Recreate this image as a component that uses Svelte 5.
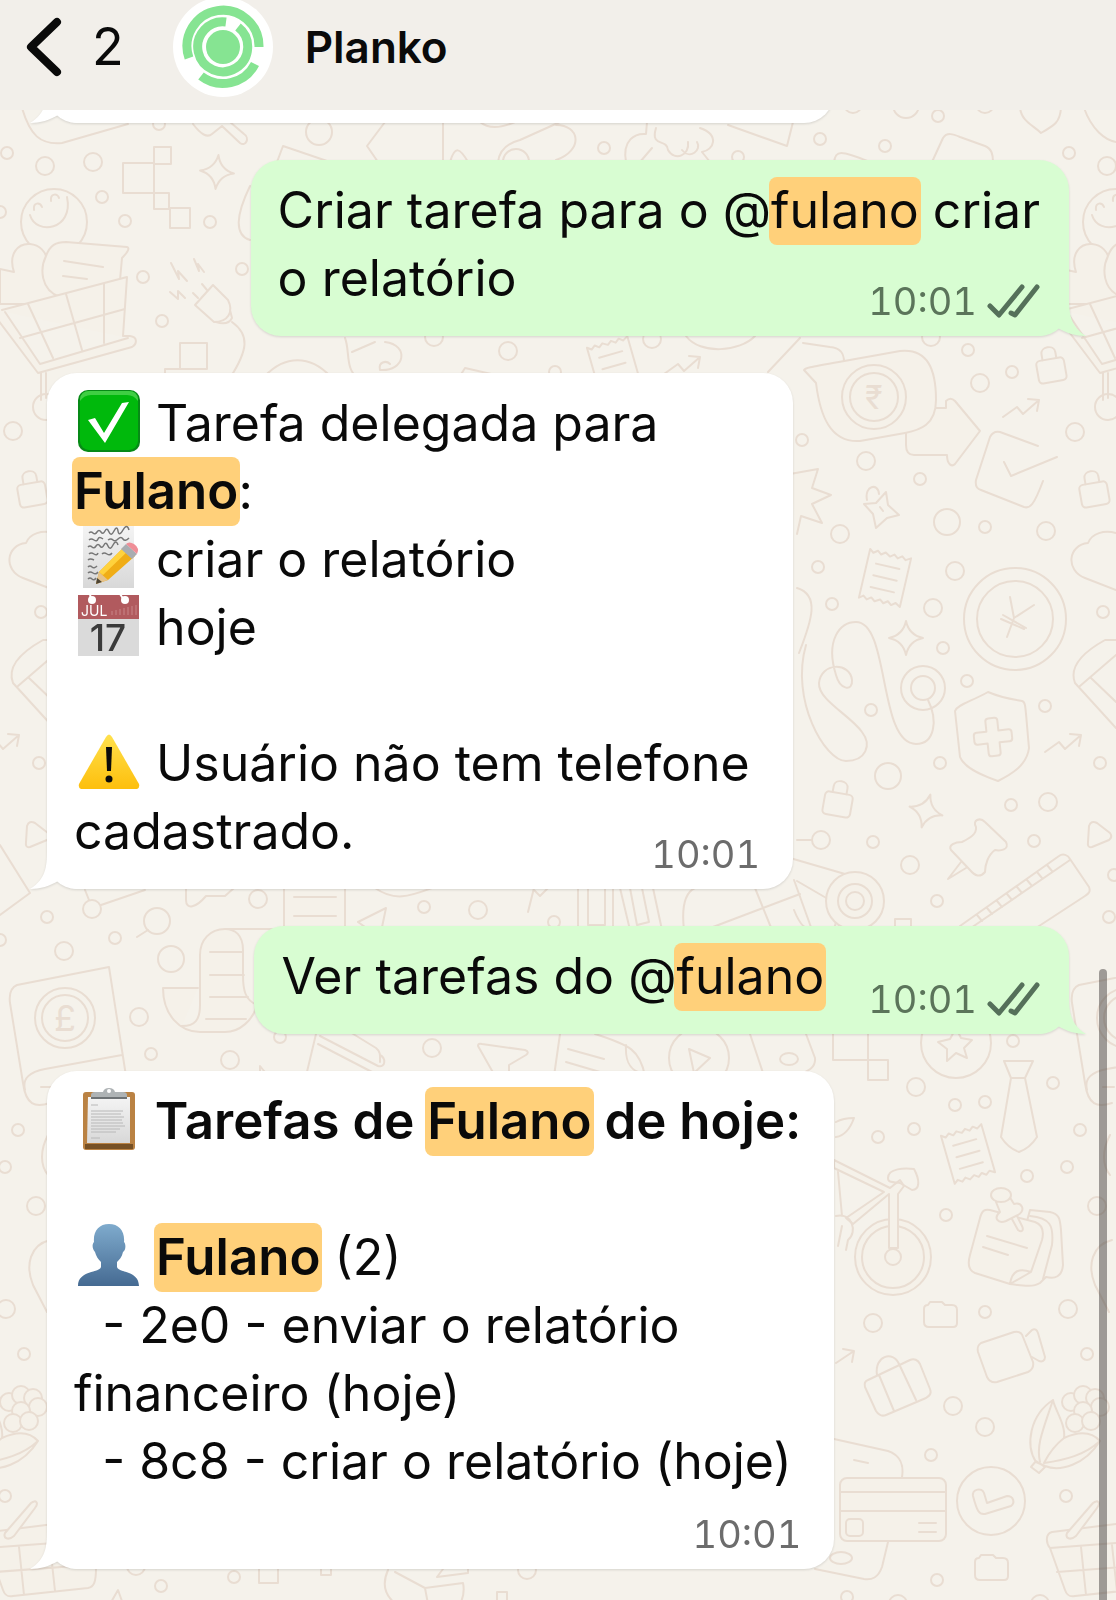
<script lang="ts">
	type Icon = 'check' | 'memo' | 'calendar' | 'warning' | 'clipboard' | 'person';

	interface Segment {
		text?: string;
		icon?: Icon;
		bold?: boolean;
		mark?: boolean;
	}

	interface Message {
		from: 'me' | 'bot';
		time: string;
		/** Where the time sits: over the last line, beside it, or on a row below. */
		meta: 'over' | 'beside' | 'below';
		lines: Segment[][];
	}

	const contact = 'Planko';
	const unread = 2;

	const messages: Message[] = [
		{
			from: 'me',
			time: '10:01',
			meta: 'over',
			lines: [
				[{ text: 'Criar tarefa para o @' }, { text: 'fulano', mark: true }, { text: ' criar' }],
				[{ text: 'o relatório' }]
			]
		},
		{
			from: 'bot',
			time: '10:01',
			meta: 'over',
			lines: [
				[{ icon: 'check' }, { text: ' Tarefa delegada para' }],
				[{ text: 'Fulano', bold: true, mark: true }, { text: ':' }],
				[{ icon: 'memo' }, { text: ' criar o relatório' }],
				[{ icon: 'calendar' }, { text: ' hoje' }],
				[],
				[{ icon: 'warning' }, { text: ' Usuário não tem telefone' }],
				[{ text: 'cadastrado.' }]
			]
		},
		{
			from: 'me',
			time: '10:01',
			meta: 'beside',
			lines: [[{ text: 'Ver tarefas do @' }, { text: 'fulano', mark: true }]]
		},
		{
			from: 'bot',
			time: '10:01',
			meta: 'below',
			lines: [
				[
					{ icon: 'clipboard' },
					{ text: ' Tarefas de ', bold: true },
					{ text: 'Fulano', bold: true, mark: true },
					{ text: ' de hoje:', bold: true }
				],
				[],
				[{ icon: 'person' }, { text: ' ' }, { text: 'Fulano', bold: true, mark: true }, { text: ' (2)' }],
				[{ text: '  - 2e0 - enviar o relatório' }],
				[{ text: 'financeiro (hoje)' }],
				[{ text: '  - 8c8 - criar o relatório (hoje)' }]
			]
		}
	];

	// wallpaper bubbles, grouped by radius
	const dots = [
		{
			r: 6,
			at: [
				[7, 153], [102, 197], [125, 221], [210, 222], [159, 124], [143, 277], [162, 321], [242, 269], [0, 212],
				[555, 372], [604, 148], [820, 139], [885, 146], [938, 116], [1069, 153], [738, 157], [968, 350],
				[1012, 372], [802, 440], [920, 479], [985, 527], [818, 567], [832, 604], [1103, 612], [943, 648],
				[967, 681], [871, 710], [1045, 706], [940, 763], [1100, 763], [1011, 805], [873, 842], [1034, 841],
				[937, 901], [1109, 917], [1114, 875], [47, 917], [115, 938], [151, 1054], [424, 907], [554, 922],
				[280, 1037], [18, 1130], [5, 1167], [1013, 1041], [955, 1105], [985, 1102], [1053, 1083],
				[1080, 1130], [878, 1137], [914, 1129], [1067, 1167], [1027, 1176], [946, 1215], [985, 1312],
				[931, 1455], [1087, 1354], [1066, 1496], [937, 1580], [847, 1597], [24, 1354], [5, 1496],
				[234, 1577], [161, 1586], [41, 612], [39, 763], [0, 940]
			]
		},
		{
			r: 9,
			at: [
				[45, 166], [93, 162], [434, 337], [508, 351], [1107, 166], [853, 104], [985, 104], [652, 339],
				[931, 337], [980, 383], [1075, 432], [866, 461], [1046, 531], [840, 534], [955, 571], [933, 608],
				[1048, 802], [821, 840], [910, 865], [92, 909], [64, 951], [139, 1017], [230, 1060], [258, 899],
				[478, 910], [432, 1048], [36, 1206], [6, 1309], [916, 1087], [1097, 1206], [1068, 1309],
				[873, 1323], [953, 1406], [985, 1427], [898, 1604], [1040, 1604], [136, 1566], [527, 1570], [13, 431]
			]
		},
		{
			r: 13,
			at: [[319, 132], [516, 162], [906, 105], [947, 522], [888, 776], [171, 959], [157, 921], [1108, 407], [46, 407]]
		}
	];
</script>

{#snippet lock(x: number, y: number, angle: number)}
	<g transform="translate({x} {y}) rotate({angle})">
		<rect x="-14" y="-9" width="28" height="23" rx="4" />
		<path d="M-7 -9V-15C-7 -23 7 -23 7 -15V-9" />
	</g>
{/snippet}

{#snippet receipt(x: number, y: number, angle: number)}
	<g transform="translate({x} {y}) rotate({angle})">
		<path
			d="M-21 -25l4 3 4-3 4 3 4-3 5 3 4-3 4 3 4-3 4 3 5-3V25l-5-3-4 3-4-3-4 3-4-3-5 3-4-3-4 3-4-3-4 3ZM-12 -12H12M-12 0H12M-12 12H12"
		/>
	</g>
{/snippet}

{#snippet sparkle(x: number, y: number, angle: number)}
	<path
		transform="translate({x} {y}) rotate({angle})"
		d="M0 -17Q3 -3 17 0Q3 3 0 17Q-3 3 -17 0Q-3 -3 0 -17Z"
	/>
{/snippet}

{#snippet trend(x: number, y: number)}
	<path transform="translate({x} {y})" d="M0 0L14 -10L20 -3L36 -17M25 -18L36 -17L34 -6" />
{/snippet}

{#snippet folder(x: number, y: number)}
	<path
		transform="translate({x} {y})"
		d="M0 8C0 5 2 4 4 4L6 1H18L21 4H28C31 4 33 6 33 9V22C33 25 31 26 29 26H5C2 26 0 24 0 21Z"
	/>
{/snippet}

{#snippet icon(name: Icon)}
	<svg class="icon" viewBox="0 0 62 62" aria-hidden="true">
		{#if name === 'check'}
			<rect width="62" height="62" rx="10" fill="#078a16" />
			<rect x="2" y="1" width="58" height="59" rx="9" fill="#00b90c" />
			<path d="M11 1H51Q59 1 60 9V11Q56 5 49 5H13Q6 5 2 11V9Q3 1 11 1Z" fill="#3fce43" />
			<path d="M10 30L17 28L26 43L44 13L51 12L27 53Z" fill="#fff" />
		{:else if name === 'memo'}
			<path d="M5 0H56V62H5Z" fill="url(#paper)" />
			<g fill="none" stroke="#777" stroke-width="1.5">
				<path d="M11 7q2-2 4 0t4-1t4 0t4-1 4 1t5-1t4 0t5-1t6 0" />
				<path d="M11 14q2-2 5 0t4-1t5 0M30 14q3-2 5 0t5-1t5 0t6-1" />
				<path d="M10 21q2-2 4 0t4-1t4 0t4-1t4 1t5-1t5 0" />
				<path d="M11 28q2-2 5 0t4-1M24 28q2-2 5 0t5-1M10 34q2-2 6 0" />
				<path d="M10 41q2-2 4 0t5-1M10 47q2-2 5 0t5-1M10 53q2-2 4 0t4-1" />
			</g>
			<path d="M47 20L57 30L30 54L18 58L21 46Z" fill="#f0ad16" />
			<path d="M47 20L51 24L25 49L21 46Z" fill="#ffd23d" />
			<path d="M21 46L30 54L18 58Z" fill="#e4c28d" />
			<path d="M18 58L19 52L24 56Z" fill="#4c4434" />
			<path d="M43 23L48 18L59 28L54 33Z" fill="#a9adb1" />
			<path d="M48 18Q51 15 56 18Q62 22 59 28Z" fill="#ef8e97" />
		{:else if name === 'calendar'}
			<path d="M0 1H61V26H0Z" fill="#b15a5e" />
			<path d="M0 25H61V62H0Z" fill="#dadada" />
			<path d="M34 21v-4m4 4v-5m4 5v-6m4 6v-7m4 7v-8m4 8v-9m4 9v-10" stroke="#c98588" />
			<path d="M12 0L13 6M42 0L46 6" stroke="#fff" stroke-width="2" />
			<circle cx="14" cy="6" r="4" fill="#fff" />
			<circle cx="47" cy="6" r="4" fill="#fff" />
			<text x="3" y="22" font-size="14" fill="#fff">JUL</text>
			<text x="30" y="57" font-size="37" font-weight="500" text-anchor="middle" fill="#3b3b3b">17</text>
		{:else if name === 'warning'}
			<path d="M28 7Q31 2 34 7L61 54Q62 58 59 59H3Q0 58 1 54Z" fill="url(#amber)" />
			<path d="M28 17H34L33 41H29Z" fill="#0b0b0b" />
			<circle cx="31" cy="49" r="3.5" fill="#0b0b0b" />
		{:else if name === 'clipboard'}
			<rect x="5" y="4" width="52" height="58" rx="3" fill="#ba8243" />
			<path d="M7 56H55V61H7Z" fill="#765025" />
			<path d="M10 9H52V55H9Z" fill="url(#paper)" />
			<path d="M13 17h7M13 23h32M13 26h30M13 29h33M13 32h31M13 35h32M13 38h34M13 41h29M13 44h25M13 50h9" stroke="#b8b8b8" />
			<path d="M13 10V7Q13 4 17 4H25Q26 0 31 0Q36 0 37 4H45Q49 4 49 7V10Z" fill="#aeb3b5" />
			<path d="M13 10H49" stroke="#6e7376" stroke-width="2" />
			<circle cx="31" cy="3" r="2" fill="#fff" />
		{:else}
			<path
				d="M31 0C41 0 47 7 46 18C48 20 48 26 45 28C44 33 41 36 39 38V43C40 49 61 46 61 62H0C0 46 22 49 23 43V38C20 35 18 32 17 28C14 25 14 20 16 18C15 7 21 0 31 0Z"
				fill="url(#blue)"
			/>
		{/if}
	</svg>
{/snippet}

<div class="screen">
	<svg class="wallpaper" viewBox="0 0 1116 1600" aria-hidden="true">
		<defs>
			<linearGradient id="paper" x1="0" y1="0" x2="0" y2="1">
				<stop offset="0" stop-color="#f4f4f4" />
				<stop offset="1" stop-color="#d8d8d8" />
			</linearGradient>
			<linearGradient id="amber" x1="0" y1="0" x2="0" y2="1">
				<stop offset="0" stop-color="#ffe14d" />
				<stop offset="1" stop-color="#fdbf0d" />
			</linearGradient>
			<linearGradient id="blue" x1="0" y1="0" x2="0" y2="1">
				<stop offset="0" stop-color="#7fabcd" />
				<stop offset="1" stop-color="#456a92" />
			</linearGradient>
		</defs>

		{#each dots as { r, at }}
			{#each at as [cx, cy]}
				<circle {cx} {cy} {r} />
			{/each}
		{/each}

		<!-- drawings that repeat on both edges of the tile -->
		{#each [0, 1062] as shift}
			<g transform="translate({shift} 0)">
				<circle cx="54" cy="222" r="33" />
				<path d="M30 215C36 236 74 230 67 197M34 210C33 202 40 202 42 207M51 201C50 193 58 193 59 198" />
				<path class="fill" d="M0 269L14 272C8 254 18 243 30 244C40 245 46 252 47 260L60 297L42 304L0 304Z" />
				<path
					class="fill"
					d="M60 297C40 290 40 268 46 256C50 245 56 242 66 242L127 247C130 248 128 252 122 258L120 280Z"
				/>
				<path d="M64 261L103 267M63 276L87 279" />
				<path
					class="fill"
					d="M2 310L127 277L123 336L130 336C138 337 137 344 132 347L38 373L-8 312M5 312L40 364L128 338M28 304L53 358M66 294L82 350M104 284V343M20 338L125 309M41 373V400M46 373V398"
				/>
				<path d="M54 533C42 530 30 533 26 543C6 545 3 570 23 578L54 590" />
				<path d="M54 640H43C16 655 8 670 13 683L54 728M18 686L54 655M29 678L54 702" />
				<path d="M27 826Q29 820 35 823L48 833Q51 837 47 840L30 847Q25 848 26 842Z" />
				{@render lock(32, 492, -10)}
				{@render trend(-17, 752)}
				<path
					d="M109 967L17 985C10 988 9 995 10 1003L23 1083C26 1105 35 1108 50 1103M109 967L126 1076M122 1055L45 1069C30 1072 22 1078 25 1090M41 1087H52"
				/>
				<circle cx="65" cy="1018" r="30" />
				<circle cx="65" cy="1018" r="23" />
				<path d="M50 1240C30 1245 25 1265 33 1285L47 1312M48 1135C40 1150 40 1165 48 1175" />
			</g>
		{/each}
		<text x="65" y="1031" font-size="36">£</text>

		{#each [-1062, 0] as shift}
			<g transform="translate({shift} 0)">
				{#each [[1071, 1402], [1083, 1395], [1095, 1398], [1100, 1407], [1083, 1411], [1075, 1423], [1091, 1421]] as [cx, cy]}
					<circle class="fill" {cx} {cy} r="9" />
				{/each}
				<path
					class="fill"
					d="M1053 1400C1030 1415 1025 1445 1036 1462L1045 1466C1060 1472 1085 1465 1100 1441C1090 1430 1075 1433 1064 1438C1066 1425 1055 1410 1053 1400ZM1053 1400C1043 1430 1036 1445 1040 1462M1064 1438C1055 1445 1048 1455 1044 1463C1065 1460 1085 1455 1100 1441M1031 1467L1036 1461L1045 1467L1039 1473Z"
				/>
				<path
					class="fill"
					d="M1116 1524L1052 1532C1045 1534 1046 1543 1050 1548L1065 1590C1067 1596 1070 1597 1075 1596L1150 1588C1156 1587 1158 1582 1158 1568M1050 1548L1116 1543M1057 1572L1150 1565M1081 1547L1086 1595M1112 1545L1117 1591"
				/>
				<path
					class="fill"
					d="M1067 1533L1093 1503C1098 1499 1101 1503 1097 1508L1076 1536C1070 1541 1065 1538 1067 1533Z"
				/>
			</g>
		{/each}

		<!-- upper left -->
		<path d="M123 163H154V193H123ZM154 147H171V164H154ZM154 193H169V209H154ZM170 208H190V228H170Z" />
		<path d="M180 343H207V369H180ZM165 380V369H181" />
		{@render sparkle(217, 172, 5)}
		<path d="M171 263L179 279L178 271L187 281M194 259L199 271L198 264L204 272M170 292L178 299L178 291L185 298" />
		<path
			d="M195 305L213 285L228 300C234 312 228 322 214 322ZM202 284L207 290M193 293L198 298M216 322Q228 326 232 318L230 310M232 322C250 335 248 350 230 378"
		/>
		<path d="M22 108C30 135 40 145 62 143L128 124" />
		<path d="M193 124Q205 140 212 134L222 126L240 143C246 147 250 138 244 134L230 122" />
		<path d="M385 122L367 146L378 162M443 122V162M277 162L283 146L330 162M450 162C455 145 460 148 468 162" />
		<path d="M480 122Q492 132 515 122M498 162Q500 145 520 140L560 122" />
		<path d="M556 125C580 125 584 150 556 160M250 186C236 215 234 235 250 240" />

		<!-- upper right -->
		<path
			d="M647 122L646 134C635 133 622 140 626 162M652 148L640 162M656 128C650 148 667 138 668 150C675 162 690 155 688 142M682 150C690 160 702 150 697 142M700 128C720 135 714 150 702 152L710 162"
		/>
		<path d="M728 125L787 146L793 122M834 162C836 150 840 150 870 162" />
		<path d="M932 162L943 138C947 132 953 134 960 137L985 146C992 149 993 155 993 162" />
		<path d="M1020 108C1022 122 1033 125 1041 133C1055 125 1060 122 1061 108M1084 108C1092 130 1105 140 1116 142" />

		<!-- between the first two messages -->
		<path
			d="M345 338C350 350 345 370 358 378M265 376C285 355 310 355 330 376M375 342L352 352M385 342C410 345 405 372 380 370C378 362 386 360 390 364M460 376L465 368L500 376"
		/>
		<path d="M686 336C700 355 740 352 755 336M800 338L768 372M803 343L830 347C842 348 844 355 844 362" />
		{@render receipt(614, 366, -16)}
		{@render trend(664, 374)}
		{@render lock(1051, 368, -10)}

		<!-- right column -->
		<path
			class="fill"
			d="M936 408H946V401C949 398 952 398 955 401L980 431L955 464C952 467 947 465 947 455H914C908 455 906 451 906 445V420Z"
		/>
		<path
			class="fill"
			d="M804 370C805 367 812 367 900 351C928 348 936 370 936 400C936 425 920 430 905 433L860 441C830 443 820 415 816 383Z"
		/>
		<circle cx="874" cy="397" r="32" />
		<circle cx="874" cy="397" r="24" />
		<text x="874" y="409" font-size="32">₹</text>
		{@render trend(1003, 417)}
		<path d="M1038 446L1000 432C995 431 992 433 990 437L976 480C975 486 977 489 981 490L1024 507C1030 509 1034 505 1043 481M1004 462L1011 476L1057 457" />
		<path class="fill" d="M790 474L818 469L812 488L831 495L812 504L822 523L801 516L797 534" />
		<path
			d="M864 504L876 503L886 492L888 505L899 515L887 518L876 528L873 514ZM867 500C864 486 878 482 879 494M880 507L883 511"
		/>
		{@render receipt(885, 578, 13)}
		<circle cx="1015" cy="619" r="51" />
		<circle cx="1015" cy="619" r="38" />
		<path d="M1010 597L1014 618L1034 605M1014 618L1007 637M1003 615L1026 628M1001 619L1024 629" />
		{@render sparkle(906, 638, 0)}
		{@render sparkle(926, 811, 15)}
		<path d="M797 588C820 595 812 620 799 653" />
		<path
			d="M806 645C790 700 825 761 846 761C866 761 872 745 862 732C850 715 818 700 819 683C821 662 850 662 852 680C853 692 840 690 836 675C825 640 840 622 856 622C890 622 878 744 916 744C935 744 938 720 928 700"
		/>
		<circle cx="923" cy="688" r="22" />
		<circle cx="923" cy="688" r="12" />
		<path
			d="M988 692C1002 698 1010 699 1022 701C1026 702 1025 705 1029 748C1027 765 1012 774 998 781C978 774 964 767 960 757L955 711C957 705 970 702 988 692Z"
		/>
		<path
			class="fill"
			transform="translate(993 737) rotate(-6)"
			d="M-6 -16Q-6 -19 -3 -19H3Q6 -19 6 -16V-6H16Q19 -6 19 -3V3Q19 6 16 6H6V16Q6 19 3 19H-3Q-6 19 -6 16V6H-16Q-19 6 -19 3V-3Q-19 -6 -16 -6H-6Z"
		/>
		{@render lock(838, 802, 10)}
		<path
			d="M951 850C948 845 955 842 962 842C970 838 977 834 976 827C972 820 980 817 985 822L1006 842C1010 850 1000 851 995 850C988 855 985 865 985 872C980 878 975 876 970 870ZM961 862L948 879L966 868"
		/>
		<path
			d="M960 926L1059 856C1063 853 1068 855 1070 859L1089 887C1091 892 1088 894 1085 896L1036 928M968 930L1070 860M977 915L982 921M987 908L992 914M997 901L1002 907M1007 894L1012 900M1017 887L1022 893M1027 880L1032 886M1037 872L1042 878M1047 865L1052 871"
		/>
		<path d="M797 840H812M790 858L845 874M797 881L828 899M794 880L812 930M834 930L840 905M868 930L872 908M895 930V919H911V930" />
		<circle class="fill" cx="855" cy="901" r="29" />
		<circle class="fill" cx="855" cy="901" r="17" />
		<circle cx="855" cy="901" r="9" />

		<!-- between the second and third messages -->
		<path d="M578 888V930M588 888V925H605V888M613 888V930M620 888L630 930M630 888L637 925L649 922L642 888M653 888L662 930" />
		<path d="M684 930Q680 895 695 888M755 888L772 930M705 930L800 894M794 910C800 925 805 930 815 930M534 888L528 912M534 890L540 896L548 888" />
		<path d="M85 890L89 900M101 905L145 890M148 930L137 937M0 845L30 893L0 915" />
		<path d="M186 888V900C186 910 196 908 206 896H225L234 888M375 888C395 902 410 896 432 888M358 922L386 908L381 932M358 922L372 932" />
		<path
			class="fill"
			d="M225 929H284V888H345V930H284M294 897H336M294 916H336M198 988H163C163 1015 180 1032 200 1032H225C240 1032 253 1020 257 1005C245 1000 243 990 243 975V950C243 935 235 929 225 929C210 929 200 940 200 955V1005C200 1020 195 1026 182 1026M210 952H243M210 975H244M210 997H248M206 1019H246"
		/>

		<!-- between the third and fourth messages -->
		<path d="M306 1076L316 1034M320 1036L378 1066C386 1068 386 1058 380 1055M318 1044L372 1072M350 1032L376 1048C381 1052 380 1056 380 1062M260 1076V1066L268 1076" />
		<path d="M478 1046Q478 1043 482 1044L525 1050Q530 1052 526 1055L509 1065V1076M478 1046L495 1076M560 1034L554 1076M595 1034C630 1045 640 1050 645 1076M568 1049L604 1059M566 1062L600 1072M626 1045C625 1062 630 1072 645 1074" />
		<circle cx="699" cy="1058" r="30" />
		<path d="M689 1049L710 1058L694 1073ZM750 1034L764 1076M806 1034L815 1058C816 1068 808 1072 798 1074" />
		<ellipse cx="789" cy="1059" rx="9" ry="6" />
		<path d="M833 1034V1060H868V1034M868 1060H888V1080H868Z" />
		<circle cx="956" cy="1043" r="35" />
		<path d="M956 1028L961 1038L972 1040L964 1048L967 1058L956 1053L947 1061V1049L938 1042L950 1039Z" />

		<!-- lower right -->
		<path d="M1004 1061H1033L1025 1078H1011ZM1011 1078L1001 1137Q1008 1148 1019 1152Q1030 1148 1037 1137L1025 1078" />
		{@render receipt(968, 1154, -16)}
		<circle class="fill" cx="893" cy="1257" r="38" />
		<circle cx="893" cy="1257" r="31" />
		<circle cx="893" cy="1257" r="8" />
		<path class="fill" d="M889 1248V1194L853 1224L846 1218L884 1192L834 1168V1160L890 1188L900 1180L904 1186L898 1194V1248Z" />
		<path
			d="M888 1178C888 1168 905 1168 914 1169C920 1180 920 1190 912 1190L900 1183C890 1182 888 1182 888 1178ZM838 1172L842 1216M836 1216C852 1212 858 1232 848 1240L846 1250M838 1246L842 1226M836 1137Q848 1135 854 1118Q843 1118 836 1122"
		/>
		<path
			class="fill"
			d="M1030 1210L1050 1212C1060 1214 1060 1220 1061 1230L1063 1265C1062 1277 1055 1279 1046 1277L1040 1283C1032 1288 1020 1285 1010 1284Z"
		/>
		<path
			class="fill"
			d="M990 1210L1035 1222C1043 1225 1044 1232 1042 1240L1031 1272L1010 1284L975 1273C968 1270 968 1262 970 1255L980 1218C982 1210 985 1209 990 1210ZM1010 1284C1012 1270 1020 1268 1031 1272M1030 1216C1050 1218 1054 1225 1052 1245L1043 1279M987 1236L1027 1248M983 1247L1008 1255"
		/>
		<path class="fill" d="M996 1202L1000 1212C993 1218 998 1224 1006 1221L1018 1215C1026 1210 1022 1202 1014 1204L1009 1196ZM1012 1219L1018 1230C1022 1233 1024 1230 1022 1226L1017 1216" />
		<ellipse class="fill" cx="1001" cy="1195" rx="10" ry="7" />
		{@render folder(924, 1301)}
		{@render folder(975, 1554)}
		<path
			d="M981 1343L1014 1332C1019 1331 1022 1333 1023 1337L1033 1362C1034 1367 1032 1370 1028 1372L997 1382C992 1383 989 1381 987 1377L978 1352C977 1347 978 1345 981 1343ZM1026 1336L1032 1330C1035 1328 1037 1330 1038 1333L1045 1357C1045 1361 1042 1362 1039 1361L1032 1357"
		/>
		<path
			d="M868 1380L910 1360C914 1358 918 1360 920 1364L930 1389C932 1394 929 1396 926 1398L886 1415C881 1417 878 1414 876 1411L865 1387C864 1383 865 1381 868 1380ZM877 1375C874 1356 893 1350 899 1364M879 1375L894 1411M900 1366L916 1400M836 1363L854 1351M843 1349L854 1351L852 1362"
		/>
		<path d="M834 1439L888 1451C900 1455 904 1465 902 1477M888 1542L882 1567C878 1578 872 1580 864 1579L815 1569M854 1460L868 1463" />
		<ellipse cx="841" cy="1558" rx="11" ry="6" />
		<rect class="fill" x="840" y="1478" width="106" height="63" rx="7" />
		<path d="M840 1492H946M840 1511H946M919 1523H936M919 1532H936" />
		<rect x="846" y="1519" width="17" height="17" rx="4" />
		<circle cx="991" cy="1501" r="34" />
		<path
			class="fill"
			d="M973 1496C972 1489 982 1487 984 1493L987 1503L1007 1496C1014 1496 1015 1503 1011 1506L985 1514C979 1515 977 1511 973 1496Z"
		/>

		<!-- below the last message -->
		<path
			d="M259 1565V1583H278V1565M321 1565V1575H331V1565M388 1570C380 1588 388 1598 396 1604M395 1572L425 1588L463 1583C465 1592 462 1600 460 1604M425 1588L428 1604M446 1565L437 1577L468 1573V1565M497 1604V1592H507V1604M110 1604L118 1590L123 1604"
		/>
	</svg>

	<header>
		<button class="back" aria-label="Voltar, {unread} conversas não lidas">
			<svg width="36" height="60" viewBox="0 0 36 60" aria-hidden="true">
				<path d="M31 5L5 30L31 55" />
			</svg>
			<span>{unread}</span>
		</button>
		<svg class="avatar" viewBox="-50 -50 100 100" aria-hidden="true">
			<circle r="17" />
			<path d="M15 -20A25 25 0 1 1 3 -25M-34 11A36 36 0 1 1 36 0M32 17A36 36 0 0 1 -22 29" />
		</svg>
		<h1>{contact}</h1>
	</header>

	<main>
		<div class="bubble bot earlier">
			<svg class="tail" viewBox="0 0 50 36" aria-hidden="true">
				<path d="M17 0C17 18 13 28 0 36C10 36 20 33 28 28C35 33 42 36 50 36V0Z" />
			</svg>
		</div>

		{#each messages as message}
			<article class="bubble {message.from} {message.meta}">
				<svg class="tail" viewBox="0 0 50 36" aria-hidden="true">
					<path d="M17 0C17 18 13 28 0 36C10 36 20 33 28 28C35 33 42 36 50 36V0Z" />
				</svg>
				<div class="text">
					{#each message.lines as line}
						<p>
							{#each line as part}{#if part.icon}{@render icon(part.icon)}{:else if part.mark}<mark class:bold={part.bold}>{part.text}</mark>{:else}<span class:bold={part.bold}>{part.text}</span>{/if}{/each}
						</p>
					{/each}
				</div>
				<div class="meta">
					<time>{message.time}</time>
					{#if message.from === 'me'}
						<svg class="ticks" viewBox="0 0 53 34" role="img" aria-label="Entregue">
							<path d="M3 22L12 31L35 3M24 29L28 31L50 3" />
						</svg>
					{/if}
				</div>
			</article>
		{/each}
	</main>

	<div class="scrollbar"></div>
</div>

<style>
	:global(body) {
		margin: 0;
		background: #f5f2eb;
	}

	.screen {
		position: relative;
		min-height: 100vh;
		overflow: hidden;
		background: #f5f2eb;
		color: #0a0a0a;
		font-family: Inter, 'Liberation Sans', sans-serif;
		font-size: 50px;
	}

	.wallpaper {
		position: absolute;
		top: 0;
		left: 0;
		width: 100%;
		fill: none;
		stroke: #e9ddd2;
		stroke-width: 2;
		stroke-linejoin: round;
		stroke-linecap: round;
	}
	.wallpaper .fill {
		fill: #f5f1e9;
	}
	.wallpaper text {
		fill: #e9ddd2;
		stroke: none;
		text-anchor: middle;
	}

	header {
		position: relative;
		display: flex;
		align-items: center;
		box-sizing: border-box;
		height: 110px;
		padding: 0 26px 17px;
		background: #f2efea;
	}

	.back {
		display: flex;
		align-items: center;
		gap: 30px;
		padding: 0;
		border: 0;
		background: none;
		color: inherit;
		font: inherit;
		font-size: 52px;
	}
	.back path {
		fill: none;
		stroke: #0a0a0a;
		stroke-width: 8;
		stroke-linecap: round;
		stroke-linejoin: round;
	}

	.avatar {
		width: 100px;
		height: 100px;
		margin: 0 32px 0 49px;
		border-radius: 50%;
		background: #fff;
		fill: #86e492;
	}
	.avatar path {
		fill: none;
		stroke: #86e492;
		stroke-width: 9;
	}

	h1 {
		margin: 0;
		font-size: 44px;
		font-weight: 600;
	}

	main {
		position: relative;
		display: flex;
		flex-direction: column;
		align-items: flex-start;
		gap: 37px;
		overflow: hidden;
		padding: 0 47px 31px;
	}

	.bubble {
		position: relative;
		display: grid;
		box-sizing: border-box;
		padding: 16px 29px 24px 27px;
		border-radius: 30px;
		filter: drop-shadow(0 1px 1px #00000020);
	}
	.bot {
		min-width: 73%;
		padding-right: 33px;
		background: #fff;
		fill: #fff;
	}
	.me {
		align-self: flex-end;
		background: #d8fdd2;
		fill: #d8fdd2;
	}
	.earlier {
		width: 77%;
		height: 60px;
		margin-top: -47px;
	}

	.tail {
		position: absolute;
		bottom: 0;
		left: -17px;
		width: 50px;
		height: 36px;
	}
	.me .tail {
		right: -17px;
		left: auto;
		transform: scaleX(-1);
	}

	.text {
		grid-area: 1 / 1;
		position: relative;
	}
	p {
		min-height: 68px;
		margin: 0;
		line-height: 68px;
		white-space: pre;
	}
	.bold {
		font-size: 51px;
		font-weight: 600;
		line-height: 1;
	}
	mark {
		margin: 0 -2px;
		padding: 3px 2px 5px;
		border-radius: 8px;
		background: #ffd07a;
		color: inherit;
	}

	.icon {
		width: 62px;
		height: 62px;
		margin: 0 2px 0 4px;
		vertical-align: -11px;
		overflow: visible;
	}

	.meta {
		grid-area: 1 / 1;
		place-self: end;
		display: flex;
		align-items: center;
		gap: 10px;
		margin-bottom: -13px;
		color: #6c6c6c;
		font-size: 38px;
		font-variant-numeric: tabular-nums;
		line-height: 48px;
	}
	.me .meta {
		color: #5b745a;
	}
	.beside .meta {
		grid-area: 1 / 2;
		margin-left: 44px;
	}
	.below .meta {
		grid-area: 2 / 1;
		margin-top: 15px;
	}

	.ticks {
		width: 53px;
		height: 34px;
		fill: none;
		stroke: #55705a;
		stroke-width: 5;
		stroke-linecap: round;
		stroke-linejoin: round;
	}

	.scrollbar {
		position: absolute;
		top: 969px;
		right: 9px;
		bottom: 0;
		width: 8px;
		border-radius: 4px 4px 0 0;
		background: #4643407f;
	}
</style>
